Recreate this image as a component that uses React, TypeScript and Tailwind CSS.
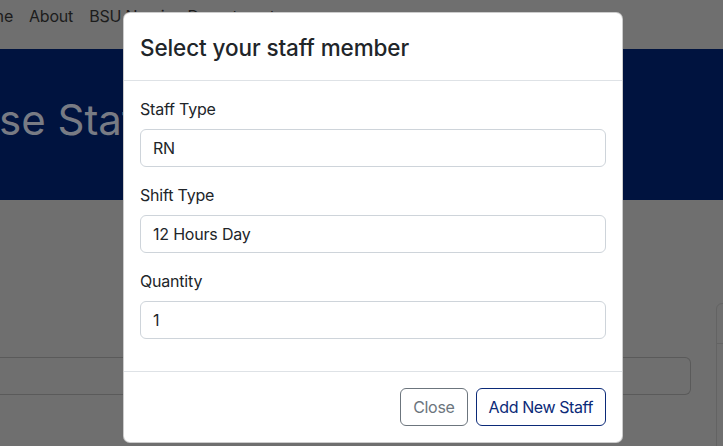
import React from 'react';

const fields = [
  { label: 'Staff Type', value: 'RN' },
  { label: 'Shift Type', value: '12 Hours Day' },
  { label: 'Quantity', value: '1' },
];

const StaffModal: React.FC = () => {
  return (
    <div className="absolute left-[123px] top-[12px] w-[500px] rounded-[7px] border border-black/20 bg-white text-[#212529]">
      <div className="flex h-[68px] items-center border-b border-[#dee2e6] px-4 pt-[2px]">
        <h4 className="text-[22.5px] font-medium leading-[1.5] tracking-[-0.1px]">Select your staff member</h4>
      </div>
      <div className="p-4">
        {fields.map((f) => (
          <div key={f.label} className="mb-4">
            <label className="mb-2 block text-[16px] leading-6 tracking-[-0.2px]">{f.label}</label>
            <input
              readOnly
              value={f.value}
              className="block h-[38px] w-full rounded-[6px] border border-[#ced4da] px-3 text-[16px] tracking-[-0.2px] text-[#212529] outline-none"
            />
          </div>
        ))}
      </div>
      <div className="flex items-center justify-end border-t border-[#dee2e6] p-3">
        <button className="m-1 h-[38px] rounded-[6px] border border-[#6c757d] px-3 text-[16px] tracking-[-0.3px] text-[#6c757d]">
          Close
        </button>
        <button className="m-1 h-[38px] rounded-[6px] border border-[#0b2a78] px-3 text-[16px] tracking-[-0.4px] text-[#0b2a78]">
          Add New Staff
        </button>
      </div>
    </div>
  );
};

export default function App() {
  return (
    <div className="relative h-[446px] w-[723px] overflow-hidden bg-[#6f6f6f] font-['Inter','Liberation_Sans',sans-serif]">
      <nav className="flex h-[49px] items-start gap-[16px] pt-[4px] text-[16px] leading-6 tracking-[-0.2px] text-[#1c1c1c]">
        <span className="-ml-[31px]">Home</span>
        <span>About</span>
        <span>BSU Nursing Department</span>
      </nav>
      <div className="flex h-[151px] items-center bg-[#00133f] pb-[10px]">
        <h1 className="-ml-[1px] text-[42px] leading-none text-[#787b84]">se Staffing</h1>
      </div>
      <div className="flex">
        <div className="w-[691px] shrink-0 pt-[157px]">
          <div className="h-[38px] rounded-r-[6px] border border-l-0 border-[#5a5a5a]" />
        </div>
        <div className="ml-[25px] mt-[103px] h-[200px] w-[60px] shrink-0 rounded-tl-[6px] border border-[#636363]">
          <div className="h-[40px] border-b border-[#636363]" />
        </div>
      </div>
      <StaffModal />
    </div>
  );
}
